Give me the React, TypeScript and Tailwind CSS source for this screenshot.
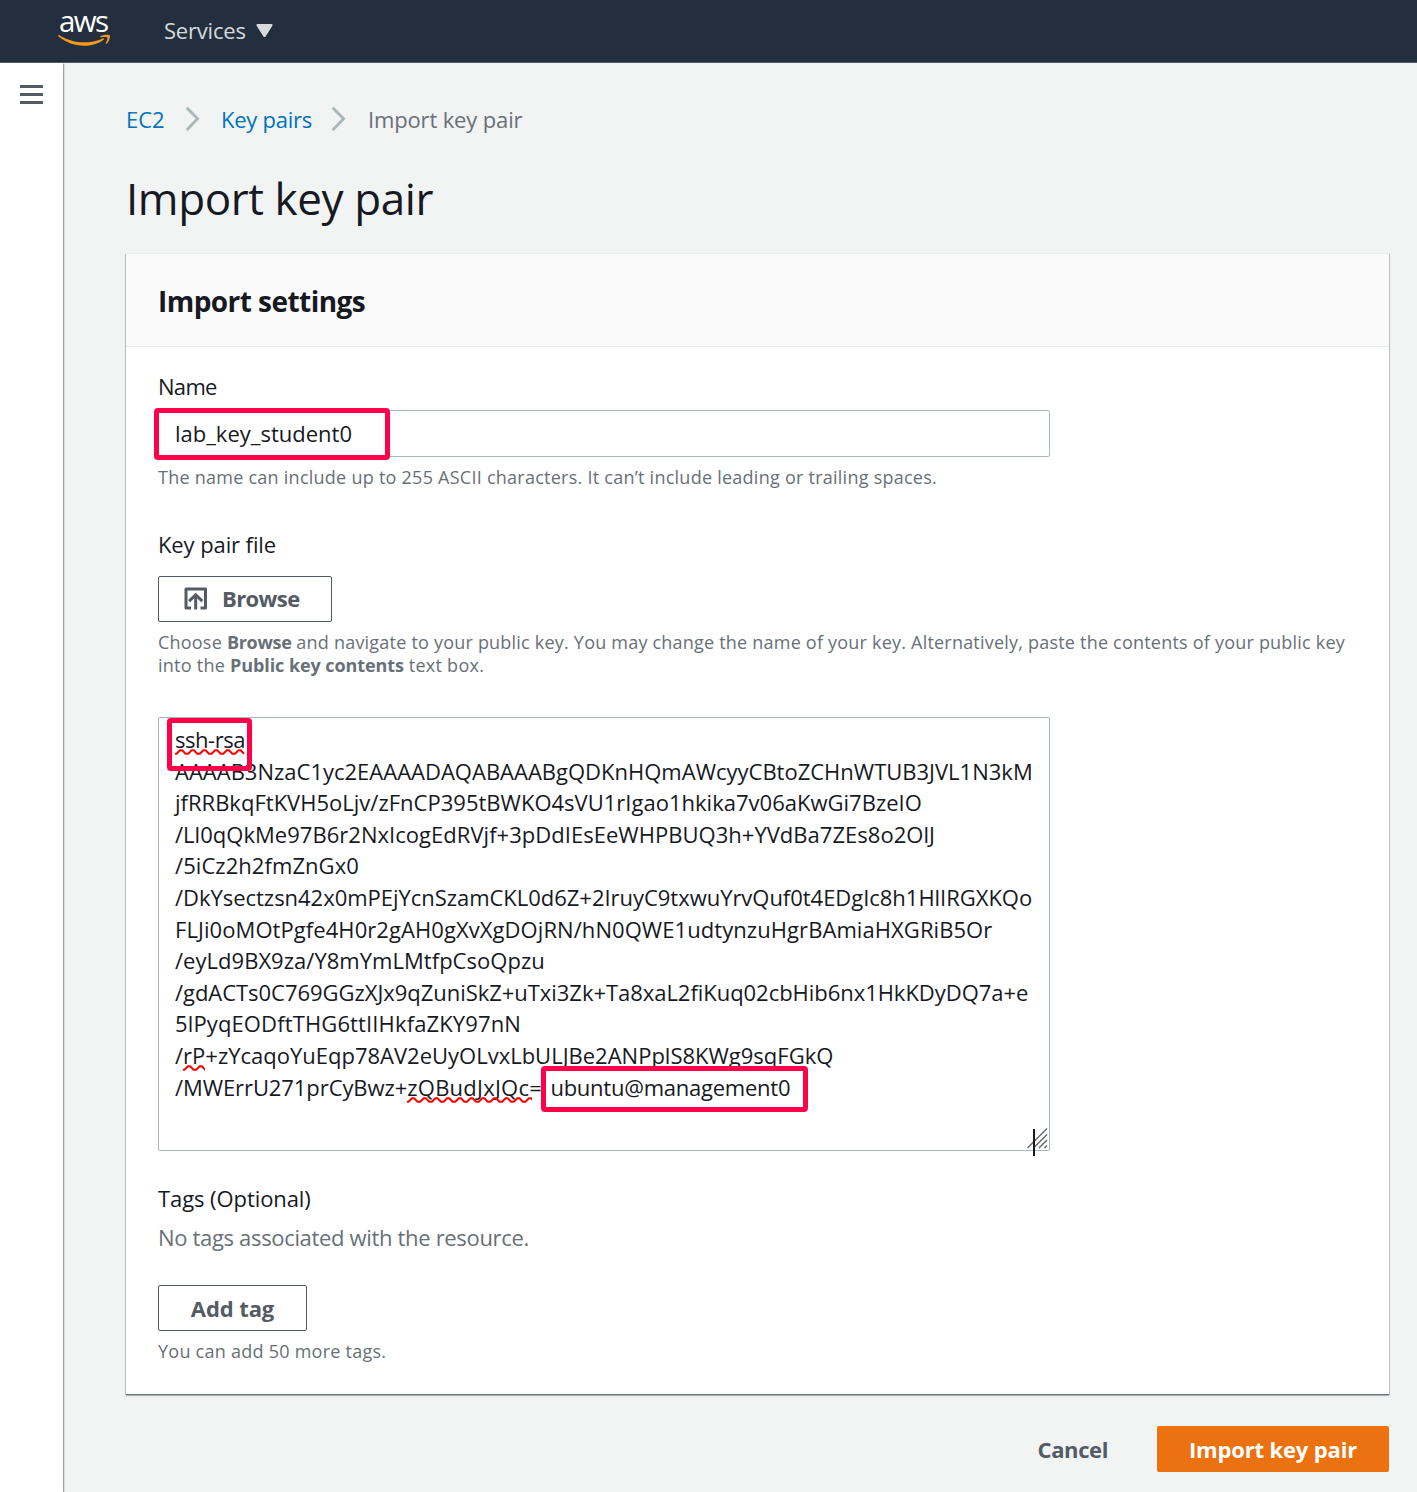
import type { ReactNode } from "react";

function AwsLogo() {
  return (
    <div className="flex w-[54px] flex-col items-start">
      <span className="ml-[2px] h-[24px] text-[29.5px] font-medium leading-[24px] tracking-[-1.6px] text-white">aws</span>
      <svg width="54" height="14" viewBox="0 0 54 14" fill="#f7981f" className="block">
        <path d="M1.2 2.6c.3-.6.8-.6 1.500-.2C10 6.800 18 9.300 27 9.300c6.200 0 12.800-1.400 18.800-3.900 1-.4 1.800.6.8 1.400C41.300 10.800 33.600 12.800 27 12.800 17.200 12.800 8.200 9.200 1.600 3.600c-.5-.4-.6-.7-.4-1z" />
        <path d="M43.200 3.200c2.400-1.700 8.600-2 9.500-1 .9 1.100-.3 6.300-3.300 8.700-.5.4-.9.200-.7-.4.8-1.800 2.200-5.300 1.600-6.100-.6-.8-4.400-.4-6.300-.1-.8.1-1.200-.6-.8-1.100z" />
      </svg>
    </div>
  );
}

function Chevron() {
  return (
    <svg width="16" height="26" viewBox="0 0 16 26" fill="none" stroke="#aab7b8" strokeWidth="2.800" className="mt-[3px] block">
      <path d="M.8 1.700 11.600 12.800.8 24" />
    </svg>
  );
}

function UploadIcon() {
  return (
    <svg width="24" height="24" viewBox="0 0 24 24" fill="none" stroke="#545b64" strokeWidth="3">
      <path d="M7 21H2V2h19.500v19h-5" strokeLinejoin="round" />
      <path d="M11.700 22.500V9" />
      <path d="M5.100 14.200 11.700 7.900l6.600 6.300" />
    </svg>
  );
}

function Highlight({ className }: { className: string }) {
  return <div className={`pointer-events-none absolute rounded-[4px] border-[5px] border-[#ff0049] ${className}`} />;
}

function Misspelled({ width, children }: { width: number; children: ReactNode }) {
  let d = "M0 4.800";
  for (let x = 0; x < width; x += 11.7) {
    d += ` L${x + 1.5} 4.800 L${x + 5} 1.300 L${x + 7.2} 1.300 L${x + 10.5} 4.800`;
  }
  return (
    <span className="relative">
      {children}
      <svg className="absolute left-0 top-[25px]" width={width} height="6" fill="none" stroke="#ff0000" strokeWidth="2">
        <path d={d} />
      </svg>
    </span>
  );
}

function Hint({ children }: { children: ReactNode }) {
  return <p className="text-[18px] leading-[23px] tracking-[0.25px] text-[#687078]">{children}</p>;
}

export default function App() {
  return (
    <div className="flex h-[1492px] w-[1417px] flex-col overflow-hidden bg-[#f2f3f3] font-['Open_Sans',sans-serif] text-[22px] leading-[32px] text-[#16191f]">
      <header className="flex h-[63px] shrink-0 border-b border-[#545b64] bg-[#232f3e]">
        <div className="ml-[57px] mt-[9px]">
          <AwsLogo />
        </div>
        <div className="ml-[53px] mt-[14px] flex h-[32px] text-[#d5dbdb]">
          <span className="w-[92px] tracking-[-0.2px]">Services</span>
          <svg width="17" height="14" viewBox="0 0 17 14" fill="#d5dbdb" className="mt-[10px]">
            <path d="M1.500 0h14c.9 0 1.400.9.900 1.700l-6.800 10.800c-.5.8-1.700.8-2.200 0L.6 1.700C.1.900.6 0 1.500 0z" />
          </svg>
        </div>
      </header>

      <div className="flex grow">
        <aside className="w-[63px] shrink-0 bg-white shadow-[1px_1px_1px_0_rgba(0,28,36,0.3),1px_1px_2px_0_rgba(0,28,36,0.15)]">
          <div className="ml-5 mt-[22px] flex w-[23px] flex-col gap-[5px]">
            <div className="h-[3px] bg-[#545b64]" />
            <div className="h-[3px] bg-[#545b64]" />
            <div className="h-[3px] bg-[#545b64]" />
          </div>
        </aside>

        <main className="ml-[63px] mt-[40px] w-[1263px]">
          <nav className="flex h-[32px]">
            <a className="w-[60px] text-[#0073bb]">EC2</a>
            <Chevron />
            <a className="ml-[19px] w-[111px] tracking-[-0.25px] text-[#0073bb]">Key pairs</a>
            <Chevron />
            <span className="ml-[20px] tracking-[-0.15px] text-[#687078]">Import key pair</span>
          </nav>

          <h1 className="mt-[33px] h-[60px] text-[44px] leading-[60px] tracking-[-0.42px]">Import key pair</h1>

          <section className="mt-[25px] h-[1141px] border-t border-[#eaeded] bg-white shadow-[0_1px_1px_0_rgba(0,28,36,0.3),1px_1px_1px_0_rgba(0,28,36,0.15),-1px_1px_1px_0_rgba(0,28,36,0.15),0_2px_1px_0_rgba(0,28,36,0.2)]">
            <div className="h-[93px] border-b border-[#eaeded] bg-[#fafafa] px-8 pt-[28px]">
              <h2 className="text-[28px] font-bold leading-[38px] tracking-[-0.55px]">Import settings</h2>
            </div>

            <div className="px-8 pt-[23px]">
              <div className="tracking-[-0.7px]">Name</div>
              <div className="relative mt-[8px] flex h-[47px] w-[892px] items-center rounded-[2px] border border-[#aab7b8] px-4 pb-px">
                lab_key_student0
                <Highlight className="left-[-5px] top-[-3px] h-[52px] w-[236px]" />
              </div>
              <div className="mt-[9px]">
                <Hint>The name can include up to 255 ASCII characters. It can’t include leading or trailing spaces.</Hint>
              </div>

              <div className="mt-[39px] tracking-[-0.1px]">Key pair file</div>
              <button className="mt-[16px] flex h-[46px] w-[174px] items-center rounded-[2px] border border-[#545b64] pb-px pl-[25px] font-bold tracking-[-0.6px] text-[#545b64]">
                <UploadIcon />
                <span className="ml-[14px] pb-[2px]">Browse</span>
              </button>
              <div className="mt-[9px] whitespace-nowrap">
                <Hint>
                  <span className="tracking-[0.21px]">
                    Choose <b className="tracking-[-0.3px]">Browse</b> and navigate to your public key. You may change the name of your key. Alternatively, paste the contents of your public key
                  </span>
                  <br />
                  into the <b className="tracking-[-0.08px]">Public key contents</b> text box.
                </Hint>
              </div>

              <div className="relative mt-[40px] h-[434px] w-[892px] whitespace-nowrap rounded-[2px] border border-[#aab7b8] pl-4 pt-[6px] leading-[31.6px]">
                <div className="tracking-[-0.45px]">
                  <Misspelled width={70}>ssh-rsa</Misspelled>
                </div>
                <div>AAAAB3NzaC1yc2EAAAADAQABAAABgQDKnHQmAWcyyCBtoZCHnWTUB3JVL1N3kM</div>
                <div className="tracking-[0.01px]">jfRRBkqFtKVH5oLjv/zFnCP395tBWKO4sVU1rIgao1hkika7v06aKwGi7BzeIO</div>
                <div className="tracking-[0.03px]">/Ll0qQkMe97B6r2NxIcogEdRVjf+3pDdIEsEeWHPBUQ3h+YVdBa7ZEs8o2OlJ</div>
                <div className="tracking-[0.06px]">/5iCz2h2fmZnGx0</div>
                <div className="tracking-[-0.03px]">/DkYsectzsn42x0mPEjYcnSzamCKL0d6Z+2IruyC9txwuYrvQuf0t4EDgIc8h1HlIRGXKQo</div>
                <div className="tracking-[0.07px]">FLJi0oMOtPgfe4H0r2gAH0gXvXgDOjRN/hN0QWE1udtynzuHgrBAmiaHXGRiB5Or</div>
                <div className="tracking-[0.03px]">/eyLd9BX9za/Y8mYmLMtfpCsoQpzu</div>
                <div className="tracking-[-0.04px]">/gdACTs0C769GGzXJx9qZuniSkZ+uTxi3Zk+Ta8xaL2fiKuq02cbHib6nx1HkKDyDQ7a+e</div>
                <div className="tracking-[0.13px]">5lPyqEODftTHG6ttIIHkfaZKY97nN</div>
                <div>
                  /<Misspelled width={22}>rP</Misspelled>+zYcaqoYuEqp78AV2eUyOLvxLbULJBe2ANPplS8KWg9sqFGkQ
                </div>
                <div>
                  <span className="tracking-[-0.08px]">/MWErrU271prCyBwz+</span>
                  <span className="tracking-[0.25px]">
                    <Misspelled width={125}>zQBudJxJQc</Misspelled>
                  </span>
                  =<span className="ml-[8.500px] tracking-[-0.24px]">ubuntu@management0</span>
                </div>
                <Highlight className="left-[8px] top-0 h-[53px] w-[85px]" />
                <Highlight className="left-[382px] top-[348px] h-[46px] w-[267px]" />
                <svg width="24" height="30" viewBox="0 0 24 30" fill="none" className="absolute bottom-[-7px] right-[-1px]">
                  <g stroke="#6b6b6b" strokeWidth="1.500">
                    <path d="M1.500 21 21 1.500M7.500 21 21 7.500M13 21l8-8M18.500 21l2.500-2.500" />
                  </g>
                  <path d="M8 2v27" stroke="#16191f" strokeWidth="2" />
                </svg>
              </div>

              <div className="mt-[31px] tracking-[-0.08px]">Tags (Optional)</div>
              <div className="mt-[7px] tracking-[-0.33px] text-[#687078]">No tags associated with the resource.</div>
              <button className="mt-[32px] flex h-[46px] w-[149px] items-center justify-center rounded-[2px] border border-[#545b64] pb-px font-bold tracking-[-0.1px] text-[#545b64]">
                Add tag
              </button>
              <div className="mt-[9px]">
                <Hint>You can add 50 more tags.</Hint>
              </div>
            </div>
          </section>

          <div className="mt-[32px] flex h-[46px] items-center justify-end font-bold tracking-[-0.16px]">
            <button className="mr-[49px] pb-px tracking-[-0.4px] text-[#545b64]">Cancel</button>
            <button className="flex h-[46px] w-[232px] items-center justify-center rounded-[2px] bg-[#ec7211] pb-px text-white">
              Import key pair
            </button>
          </div>
        </main>
      </div>
    </div>
  );
}
